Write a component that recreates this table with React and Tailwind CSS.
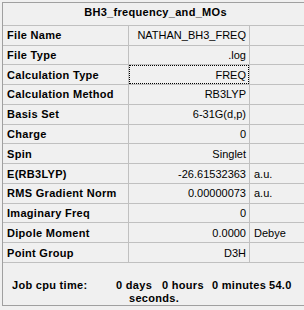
import React from "react";

const rows = [
  { label: "File Name", value: "NATHAN_BH3_FREQ", unit: "" },
  { label: "File Type", value: ".log", unit: "" },
  { label: "Calculation Type", value: "FREQ", unit: "", focused: true },
  { label: "Calculation Method", value: "RB3LYP", unit: "" },
  { label: "Basis Set", value: "6-31G(d,p)", unit: "" },
  { label: "Charge", value: "0", unit: "" },
  { label: "Spin", value: "Singlet", unit: "" },
  { label: "E(RB3LYP)", value: "-26.61532363", unit: "a.u." },
  { label: "RMS Gradient Norm", value: "0.00000073", unit: "a.u." },
  { label: "Imaginary Freq", value: "0", unit: "" },
  { label: "Dipole Moment", value: "0.0000", unit: "Debye" },
  { label: "Point Group", value: "D3H", unit: "" },
];

function Row({ label, value, unit, focused }) {
  return (
    <div className="flex h-[20px] border-b border-[#c0c0c0]">
      <div className="w-[126px] shrink-0 border-r border-[#c0c0c0] pl-[4px] flex items-center font-bold tracking-[0.3px] whitespace-nowrap">
        {label}
      </div>
      <div className="w-[121px] shrink-0 border-r border-[#c0c0c0] flex">
        <div
          className={
            focused
              ? "flex-1 flex items-center justify-end pr-[2px] border border-dotted border-black"
              : "flex-1 flex items-center justify-end pr-[3px]"
          }
        >
          {value}
        </div>
      </div>
      <div className="flex-1 pl-[4px] flex items-center whitespace-nowrap">{unit}</div>
    </div>
  );
}

export default function App() {
  return (
    <div className="w-[304px] h-[310px] overflow-hidden bg-[#f0f0f0] pt-[2px] pl-[2px] font-['Liberation_Sans',Arial,sans-serif] text-[11px] leading-[14px] text-black">
      <div className="w-[306px] h-[304px] border-t border-l border-b border-[#a0a0a0] flex flex-col">
        <div className="h-[23px] border-b border-[#c0c0c0] flex items-center justify-center pb-[3px] font-bold tracking-[0.3px]">
          BH3_frequency_and_MOs
        </div>
        {rows.map((r) => (
          <Row key={r.label} {...r} />
        ))}
        <div className="flex-1 pt-[16px] font-bold tracking-[0.3px] whitespace-nowrap leading-[13px]">
          <div className="flex pl-[9px]">
            <span className="w-[104px]">Job cpu time:</span>
            <span className="w-[46px]">0 days</span>
            <span className="w-[50px]">0 hours</span>
            <span className="w-[57px]">0 minutes</span>
            <span>54.0</span>
          </div>
          <div className="pl-[126px]">seconds.</div>
        </div>
      </div>
    </div>
  );
}
